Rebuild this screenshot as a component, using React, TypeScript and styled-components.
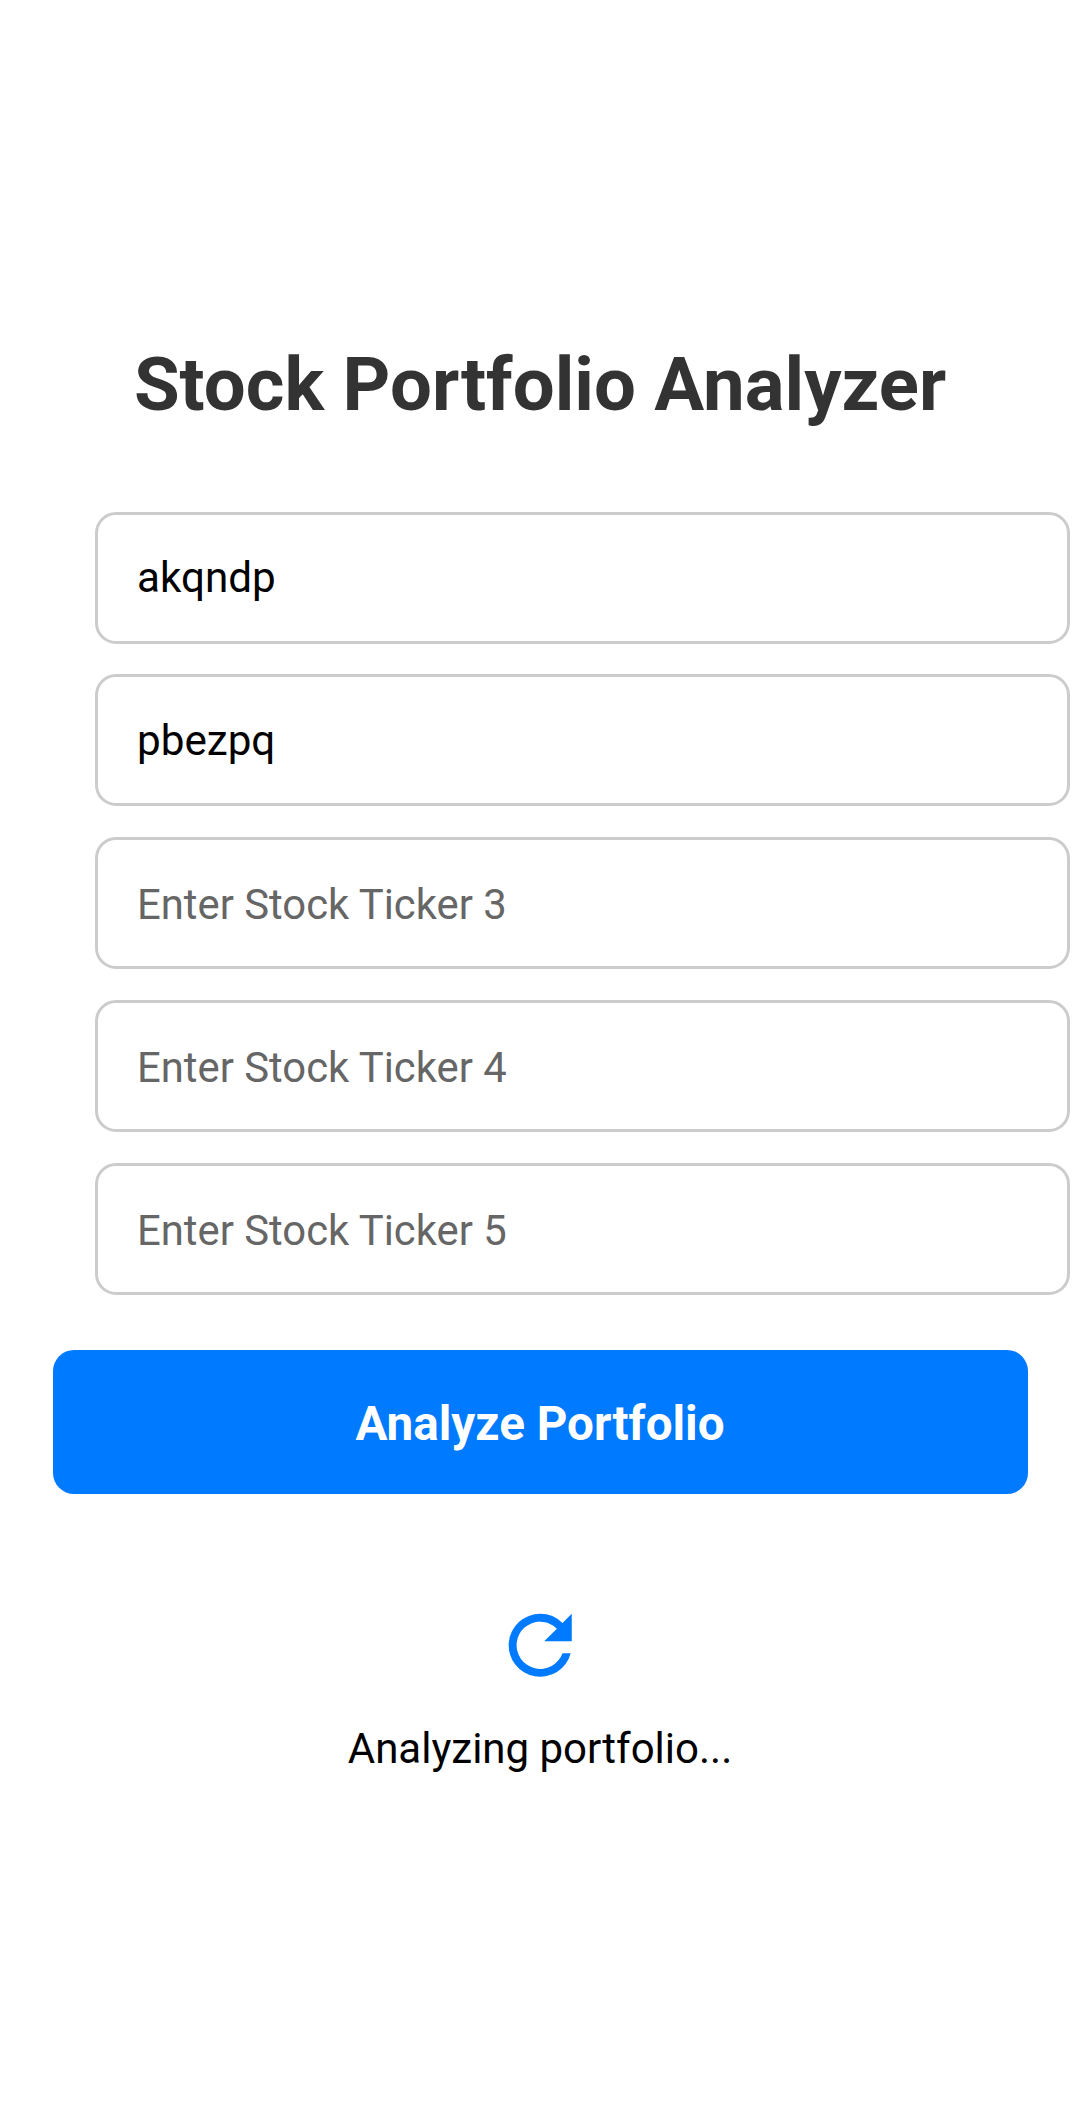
import styled, { createGlobalStyle } from "styled-components";

const GlobalStyle = createGlobalStyle`
  html, body {
    margin: 0;
    padding: 0;
    background: #ffffff;
    font-family: Roboto, "Liberation Sans", sans-serif;
  }
`;

const Screen = styled.div`
  box-sizing: border-box;
  height: 2107px;
  padding: 342px 52.5px 0;
  overflow: hidden;
`;
const Title = styled.h1`
  margin: 0 0 83.5px;
  font-size: 74.3px;
  line-height: 86px;
  font-weight: 700;
  color: #333333;
  text-align: center;
  white-space: nowrap;
`;
const Form = styled.div`
  display: flex;
  flex-direction: column;
  gap: 30.75px;
  margin-left: 42.5px;
  width: 975px;
`;
const TickerInput = styled.input`
  box-sizing: border-box;
  width: 100%;
  height: 132px;
  padding: 0 39px;
  border: 3px solid #cccccc;
  border-radius: 21px;
  background: #ffffff;
  font-family: Roboto, sans-serif;
  font-size: 42.2px;
  color: #000000;
  outline: none;
  &:placeholder-shown {
    padding-top: 3px;
    font-size: 41.8px;
  }
  &::placeholder {
    color: #666666;
    opacity: 1;
  }
`;
const AnalyzeButton = styled.button`
  display: block;
  width: 975px;
  height: 144px;
  margin-top: 55.5px;
  padding: 4px 0 0;
  border: 0;
  border-radius: 21px;
  background: #007aff;
  color: #ffffff;
  font-family: Roboto, sans-serif;
  font-size: 47.6px;
  font-weight: 700;
`;
const Loading = styled.div`
  display: flex;
  flex-direction: column;
  align-items: center;
  width: 975px;
  margin-top: 104px;
  gap: 31px;
`;
const Spinner = styled.svg`
  display: block;
  width: 94.5px;
  height: 94.5px;
  fill: #007aff;
`;
const LoadingText = styled.div`
  font-size: 42px;
  line-height: 50px;
  color: #000000;
`;

const placeholders = ["Enter Stock Ticker 3", "Enter Stock Ticker 4", "Enter Stock Ticker 5"];

export default function App() {
  return (
    <>
      <GlobalStyle />
      <Screen>
        <Title>Stock Portfolio Analyzer</Title>
        <Form>
          <TickerInput defaultValue="akqndp" />
          <TickerInput defaultValue="pbezpq" />
          {placeholders.map((text) => (
            <TickerInput key={text} placeholder={text} />
          ))}
        </Form>
        <AnalyzeButton>Analyze Portfolio</AnalyzeButton>
        <Loading>
          <Spinner viewBox="0 0 24 24">
            <path d="M17.65 6.35A7.958 7.958 0 0 0 12 4a8 8 0 1 0 7.73 10h-2.08A6 6 0 1 1 12 6c1.66 0 3.14.69 4.22 1.78L13 11h7V4l-2.35 2.35z" />
          </Spinner>
          <LoadingText>Analyzing portfolio...</LoadingText>
        </Loading>
      </Screen>
    </>
  );
}
